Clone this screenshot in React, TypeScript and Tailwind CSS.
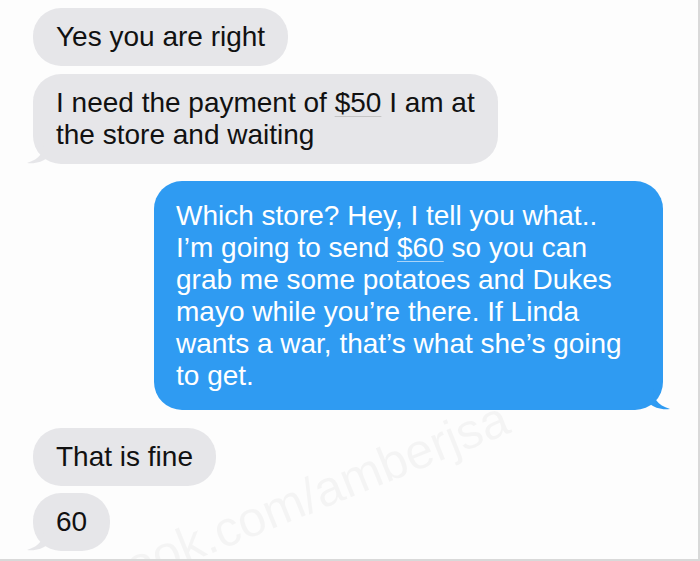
import React from "react";

const font = { fontFamily: '"Liberation Sans", Arial, sans-serif' };

function LeftTail() {
  return (
    <svg
      className="absolute -left-[7px] bottom-0"
      width="22"
      height="22"
      viewBox="0 0 22 22"
    >
      <path d="M18 0 C18 10 14 17 1 21 C9 22 17 20 22 15 L22 0 Z" fill="#e6e6e9" />
    </svg>
  );
}

function RightTail() {
  return (
    <svg
      className="absolute -right-[8px] bottom-0"
      width="22"
      height="22"
      viewBox="0 0 22 22"
    >
      <path d="M4 0 C4 10 8 17 21 21 C13 22 5 20 0 15 L0 0 Z" fill="#2f9bf2" />
    </svg>
  );
}

function Incoming({ children, tail }: { children: React.ReactNode; tail?: boolean }) {
  return (
    <div className="flex">
      <div className="relative rounded-[28px] bg-[#e6e6e9] px-[23px] py-[13px] text-[28px] leading-[32px] text-[#111]">
        {children}
        {tail && <LeftTail />}
      </div>
    </div>
  );
}

export default function App() {
  return (
    <div
      className="relative h-[561px] w-[700px] overflow-hidden border-r-2 border-b-2 border-[#d9d9d9] bg-[#fdfdfd]"
      style={font}
    >
      {/* watermark sits behind the bubbles */}
      <div className="pointer-events-none absolute left-[14px] top-[590px] origin-left -rotate-[22deg] whitespace-nowrap text-[50px] leading-none text-[#000]/[0.035]">
        facebook.com/amberjsa
      </div>

      <div className="relative flex flex-col pl-[33px] pr-[35px] pt-[8px]">
        <Incoming>Yes you are right</Incoming>
        <div className="mt-[8px]">
          <Incoming tail>
            I need the payment of{" "}
            <span className="underline decoration-[#c4c4c4] decoration-1 underline-offset-4">$50</span> I am at
            <br />
            the store and waiting
          </Incoming>
        </div>

        <div className="mt-[17px] flex justify-end">
          <div className="relative w-[509px] rounded-[28px] bg-[#2f9bf2] px-[22px] pt-[19px] pb-[18px] text-[28px] leading-[32px] text-white">
            Which store? Hey, I tell you what..
            <br />
            I’m going to send{" "}
            <span className="underline decoration-[#a9d4f8] decoration-1 underline-offset-4">$60</span> so you can
            <br />
            grab me some potatoes and Dukes
            <br />
            mayo while you’re there. If Linda
            <br />
            wants a war, that’s what she’s going
            <br />
            to get.
            <RightTail />
          </div>
        </div>

        <div className="mt-[18px]">
          <Incoming>That is fine</Incoming>
        </div>
        <div className="mt-[7px]">
          <Incoming tail>60</Incoming>
        </div>
      </div>
    </div>
  );
}
